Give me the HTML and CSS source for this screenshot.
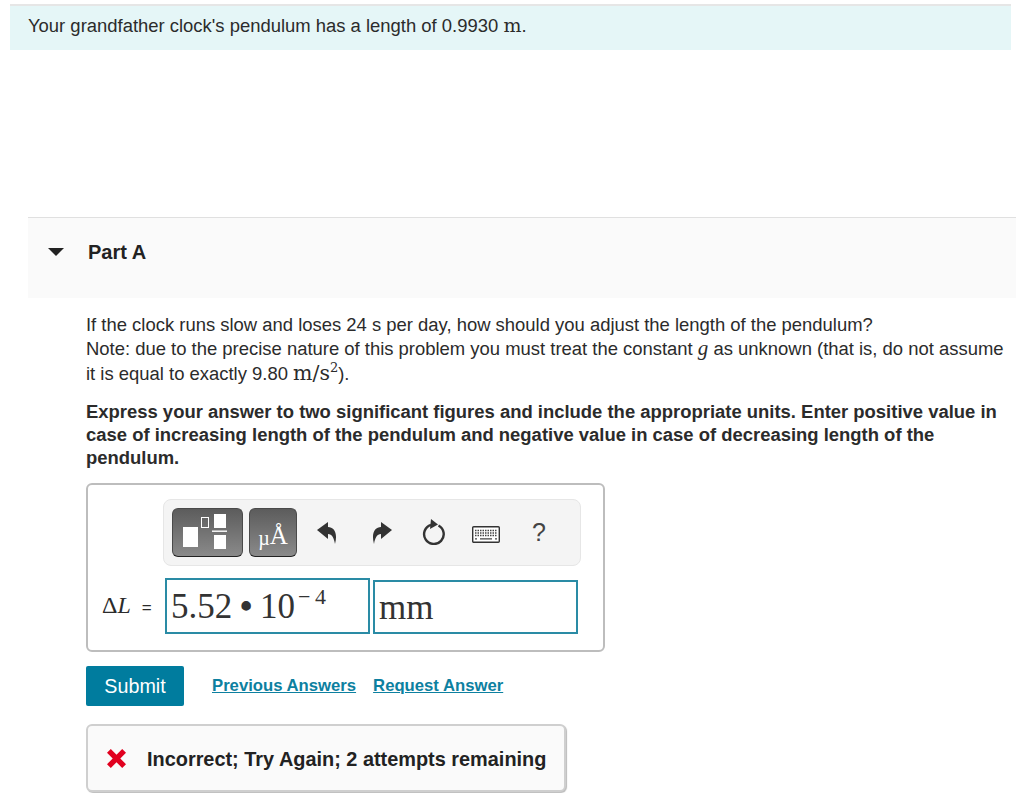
FILE: index.html
```html
<!DOCTYPE html>
<html lang="en">
<head>
<meta charset="utf-8">
<title>Part A</title>
<link rel="stylesheet" href="styles.css">
</head>
<body>
<div class="intro">Your grandfather clock's pendulum has a length of 0.9930 <span class="mathrm">m</span>.</div>
<section class="part">
  <header class="part-head">
    <svg class="caret" width="16" height="8" viewBox="0 0 16 8"><path d="M0 0H16L8 8Z" fill="#222"/></svg>
    <h2 class="part-title">Part A</h2>
  </header>
  <div class="part-body">
    <p class="question">If the clock runs slow and loses 24 s per day, how should you adjust the length of the pendulum?<br>Note: due to the precise nature of this problem you must treat the constant <i class="mathit">g</i> as unknown (that is, do not assume it is equal to exactly 9.80 <span class="mathrm mathrm-large">m/s<sup class="sup">2</sup></span>).</p>
    <p class="instructions">Express your answer to two significant figures and include the appropriate units. Enter positive value in case of increasing length of the pendulum and negative value in case of decreasing length of the pendulum.</p>
    <div class="answer-box">
      <div class="toolbar">
        <button class="tool tool-wide" type="button" aria-label="Templates">
          <svg width="69" height="47" viewBox="0 0 69 47"><rect x="10" y="18" width="15" height="20" fill="#fff"/><rect x="28.500" y="8.500" width="7" height="10" fill="none" stroke="#fff"/><rect x="41" y="5" width="12" height="14" fill="#fff"/><rect x="39" y="21.500" width="15" height="1.400" fill="#fff"/><rect x="41" y="26" width="12" height="14" fill="#fff"/></svg>
        </button>
        <button class="tool tool-units" type="button"><span class="mu">µ</span><span class="ang">Å</span></button>
        <svg class="icon icon-undo" width="20" height="22" viewBox="0 0 20 22"><path d="M0 8 11 0V5C17 5 21 11 18 22 17 16 15 12 11 12V17Z" fill="#333"/></svg>
        <svg class="icon icon-redo" width="20" height="22" viewBox="0 0 20 22"><path d="M20 8 9 0V5C3 5-1 11 2 22 3 16 5 12 9 12V17Z" fill="#333"/></svg>
        <svg class="icon icon-reset" width="24" height="27" viewBox="0 0 24 27"><path d="M9 6.800A9.800 9.800 0 1 0 16.500 7.500" fill="none" stroke="#333" stroke-width="2.400"/><path d="M9 1 16 6.500 8 11Z" fill="#333"/></svg>
        <svg class="icon icon-keys" width="28" height="17" viewBox="0 0 28 17"><rect x="0.700" y="0.700" width="26.600" height="15.600" rx="1" fill="#fff" stroke="#333" stroke-width="1.400"/><path d="M3 4.500H25M3 7H25M3 9.500H25" stroke="#444" stroke-width="1.300" stroke-dasharray="1.500 1"/><path d="M3 12.800H5M8 12.800H20M23 12.800H25" stroke="#444" stroke-width="1.300"/></svg>
        <span class="help">?</span>
      </div>
      <div class="equation">
        <span class="eq-label"><span class="delta">Δ</span><i>L</i> <span class="eq-sign">=</span></span>
        <div class="field field-value">5.52 <b class="dot">•</b> 10<span class="exponent">− 4</span></div>
        <div class="field field-unit">mm</div>
      </div>
    </div>
    <div class="actions">
      <button class="submit" type="button">Submit</button>
      <a class="link" href="#">Previous Answers</a>
      <a class="link" href="#">Request Answer</a>
    </div>
    <div class="feedback">
      <svg class="x-mark" width="19" height="19" viewBox="0 0 20 20"><path d="M0 4 4 0 10 6 16 0 20 4 14 10 20 16 16 20 10 14 4 20 0 16 6 10Z" fill="#e1001f"/></svg>
      <span>Incorrect; Try Again; 2 attempts remaining</span>
    </div>
  </div>
</section>
</body>
</html>
```
FILE: styles.css
```css
* { box-sizing: border-box; }
html, body { margin: 0; height: 793px; overflow: hidden; background: #fff; }
body {
  font-family: "Liberation Sans", Arial, sans-serif;
  font-size: 18.450px;
  color: #2b2b2b;
  padding-top: 4px;
}
.intro {
  margin-left: 10px;
  width: 1001px;
  height: 46px;
  border-top: 2px solid #e6e6e6;
  background: #e5f6f7;
  padding: 8px 0 0 18px;
  line-height: 24px;
}
.mathrm { font-family: "DejaVu Serif", "Liberation Serif", serif; font-size: 19px; line-height: 0; }
.mathrm-large { font-size: 20.500px; line-height: 24px; }
.mathit { font-family: "Liberation Serif", serif; font-size: 21px; line-height: 20px; }
.part { margin: 167px 8px 0 28px; }
.part-head {
  height: 81px;
  background: #fafafa;
  border-top: 1px solid #e0e0e0;
  display: flex;
  align-items: flex-start;
  padding: 23px 0 0 20px;
}
.caret { margin-top: 7px; }
.part-title { margin: 0 0 0 24px; font-size: 20px; font-weight: 700; line-height: 22px; color: #222; }
.part-body { padding: 15px 0 0 58px; }
.question { margin: 0; line-height: 24px; width: 925px; }
.sup { font-size: 13px; line-height: 0; }
.instructions { margin: 14px 0 0; font-weight: 700; line-height: 23px; width: 925px; }
.answer-box {
  margin-top: 14px;
  width: 519px;
  height: 169px;
  border: 2px solid #bdbdbd;
  border-radius: 6px;
  padding: 14px 0 0 75px;
}
.toolbar {
  width: 418px;
  height: 67px;
  background: #f4f4f4;
  border: 1px solid #e6e6e6;
  border-radius: 8px;
  display: flex;
  align-items: center;
  padding-left: 8px;
}
.tool {
  height: 49px;
  border: 1px solid #4a4a4a;
  border-bottom-color: #222;
  border-radius: 6px;
  background: linear-gradient(#5c5c5c, #8a8a8a);
  padding: 0;
  color: #fff;
  display: flex;
  align-items: center;
  justify-content: center;
}
.tool-wide { width: 71px; }
.tool-units {
  width: 48px;
  margin-left: 6px;
  font-family: "Liberation Serif", serif;
  font-size: 25px;
  align-items: flex-end;
  padding-bottom: 8px;
  line-height: 1;
}
.mu { font-size: 20px; }
.icon { flex: none; }
.icon-undo { margin-left: 20px; }
.icon-redo { margin-left: 35px; }
.icon-reset { margin-left: 30px; margin-top: -2px; }
.icon-keys { margin-left: 26px; margin-top: 3px; }
.help { margin-left: 32px; font-size: 25px; color: #444; }
.equation {
  display: flex;
  align-items: flex-end;
  margin-top: 12px;
  margin-left: -61px;
}
.eq-label {
  width: 63px;
  height: 41px;
  font-family: "Liberation Serif", serif;
  font-size: 24px;
  line-height: 24px;
  white-space: nowrap;
  flex: none;
}
.eq-sign { font-family: "Liberation Sans", sans-serif; font-size: 17px; margin-left: 5px; }
.field {
  width: 205px;
  border: 2px solid #2a8ba5;
  background: #fff;
  font-family: "Liberation Serif", serif;
  font-size: 35px;
  color: #333;
  padding-left: 4px;
  white-space: pre;
}
.field-value { height: 56px; line-height: 54px; display: flex; word-spacing: -1px; }
.dot { font-weight: 700; }
.field-unit { height: 54px; line-height: 52px; margin-left: 3px; }
.exponent { font-size: 22px; line-height: 34px; margin-left: 3px; word-spacing: -1px; }
.actions { display: flex; align-items: center; margin-top: 14px; }
.submit {
  width: 98px;
  height: 40px;
  border: 0;
  border-radius: 2px;
  background: #007c9e;
  color: #fff;
  font-family: "Liberation Sans", sans-serif;
  font-size: 19.700px;
  padding: 0;
  margin-right: 28px;
}
.link { color: #0d80a0; font-weight: 700; font-size: 16.700px; margin-right: 17px; }
.feedback {
  margin-top: 18px;
  width: 480px;
  height: 68px;
  background: #fafafa;
  border: 2px solid #cfcfcf;
  border-radius: 6px;
  box-shadow: 1px 1px 1px #bbb;
  display: flex;
  align-items: center;
  padding: 3px 0 0 19px;
  font-size: 19.900px;
  font-weight: 700;
  color: #222;
}
.x-mark { margin-right: 21px; flex: none; margin-top: -3px; }
```
